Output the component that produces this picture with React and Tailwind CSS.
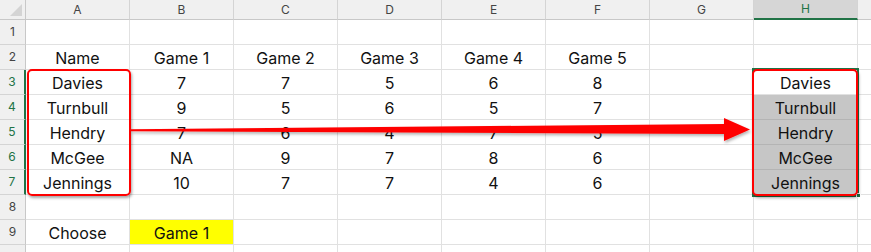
import React from 'react'

// Sheet data, row by row (columns A..H). null = empty cell
const ROWS = [
    [null, null, null, null, null, null, null, null],
    ['Name', 'Game 1', 'Game 2', 'Game 3', 'Game 4', 'Game 5', null, null],
    ['Davies', '7', '7', '5', '6', '8', null, 'Davies'],
    ['Turnbull', '9', '5', '6', '5', '7', null, 'Turnbull'],
    ['Hendry', '7', '6', '4', '7', '5', null, 'Hendry'],
    ['McGee', 'NA', '9', '7', '8', '6', null, 'McGee'],
    ['Jennings', '10', '7', '7', '4', '6', null, 'Jennings'],
    [null, null, null, null, null, null, null, null],
    ['Choose', 'Game 1', null, null, null, null, null, null],
]

const COLS = ['A', 'B', 'C', 'D', 'E', 'F', 'G', 'H']

function cellClass(r, c) {
    // r is 1-based sheet row, c is 0-based column index
    if (r === 9 && c === 1) return 'bg-[#ffff00] border-[#e1e1e1]'
    if (c === 7 && r >= 4 && r <= 7) return 'bg-[#c6c6c6] border-[#b4b4b4]'
    return 'bg-white border-[#e1e1e1]'
}

export default function App() {
    return (
        <div className="relative w-[871px] h-[252px] overflow-hidden bg-white font-['Inter','Liberation_Sans',sans-serif]">
            <div className="grid grid-cols-[26px_repeat(8,104px)_1fr] grid-rows-[20px_repeat(9,25px)_1fr] h-full">
                {/* corner select-all */}
                <div className="relative bg-[#f0f0f0] border-r border-b border-[#c8c8c8]">
                    <div className="absolute right-[3px] bottom-[3px] w-0 h-0 border-l-[12px] border-l-transparent border-b-[12px] border-b-[#d4d4d4]" />
                </div>
                {COLS.map((l) => (
                    <div
                        key={l}
                        className={`flex items-center justify-center text-[12px] text-[#444] border-r border-[#d4d4d4] ${
                            l === 'H' ? 'bg-[#d6d6d6] border-b-2 border-b-[#217346] text-[#217346]' : 'bg-[#f0f0f0] border-b border-b-[#c8c8c8]'
                        }`}
                    >
                        {l}
                    </div>
                ))}
                <div className="bg-[#f0f0f0] border-b border-[#c8c8c8]" />

                {ROWS.map((row, i) => {
                    const r = i + 1
                    const sel = r >= 3 && r <= 7
                    return (
                        <React.Fragment key={r}>
                            <div
                                className={`flex items-center justify-center text-[12px] bg-[#f0f0f0] border-b border-[#d4d4d4] ${
                                    sel ? 'text-[#217346] border-r-2 border-r-[#217346]' : 'text-[#444] border-r border-r-[#c8c8c8]'
                                }`}
                            >
                                {r}
                            </div>
                            {row.map((v, c) => (
                                <div
                                    key={c}
                                    className={`flex items-end justify-center pb-[1px] text-[16px] leading-[20px] text-[#111] border-r border-b ${cellClass(r, c)}`}
                                >
                                    {v}
                                </div>
                            ))}
                            <div className="border-b border-[#e1e1e1]" />
                        </React.Fragment>
                    )
                })}

                {/* row 10, only its top edge shows */}
                <div className="bg-[#f0f0f0] border-r border-[#c8c8c8]" />
                {COLS.map((l) => (
                    <div key={l} className="border-r border-[#e1e1e1]" />
                ))}
                <div />
            </div>

            {/* selection H3:H7 */}
            <div className="absolute left-[752px] top-[68px] w-[107px] h-[129px] border-2 border-[#217346]" />
            <div className="absolute left-[856px] top-[193px] w-[5px] h-[5px] bg-[#217346] border border-white" />

            {/* red callout boxes */}
            <div className="absolute left-[27px] top-[69px] w-[104px] h-[127px] rounded-[5px] border-2 border-[#ff0000] shadow-[1px_2px_3px_rgba(0,0,0,0.35)]" />
            <div className="absolute left-[752px] top-[69px] w-[106px] h-[127px] rounded-[5px] border-2 border-[#ff0000] shadow-[1px_2px_3px_rgba(0,0,0,0.35)]" />

            {/* arrow from names to the H list */}
            <svg className="absolute inset-0 pointer-events-none" width="871" height="252" viewBox="0 0 871 252">
                <defs>
                    <filter id="arrowShadow" x="-5%" y="-50%" width="110%" height="200%">
                        <feDropShadow dx="1" dy="2" stdDeviation="1.5" floodColor="#000" floodOpacity="0.3" />
                    </filter>
                </defs>
                <polygon
                    points="131,129.2 724,124 724,118 750,129.5 724,141 724,134 131,131.2"
                    fill="#ff0000"
                    filter="url(#arrowShadow)"
                />
            </svg>
        </div>
    )
}
